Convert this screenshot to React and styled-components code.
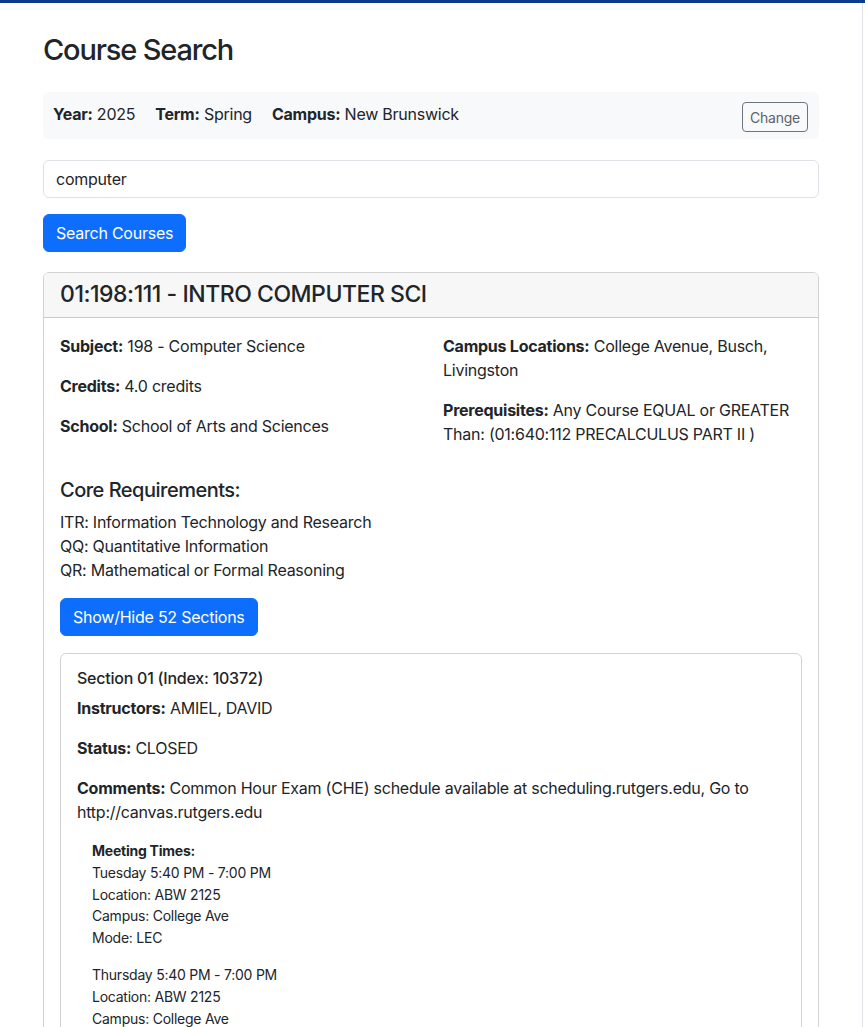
import React from 'react';
import styled, { createGlobalStyle } from 'styled-components';

const GlobalStyle = createGlobalStyle`
  * { box-sizing: border-box; }
  body {
    margin: 0;
    border-top: 3px solid #0b3b8c;
    font-family: Inter, "Noto Sans", "Liberation Sans", sans-serif;
    font-size: 16px;
    line-height: 1.5;
    letter-spacing: -0.015em;
    color: #212529;
    background: #fff;
  }
  button, input { letter-spacing: inherit; }
`;

const Page = styled.div`
  width: 863px;
  min-height: calc(100vh - 3px);
  padding: 30px 43px 40px;
  border-right: 1px solid #dee2e6;
`;

const Title = styled.h2`
  font-size: 29px;
  font-weight: 500;
  line-height: 1.2;
  letter-spacing: -0.04em;
  margin: 0 0 24px;
`;

const InfoBar = styled.div`
  display: flex;
  justify-content: space-between;
  align-items: flex-start;
  background: #f8f9fa;
  border-radius: 6px;
  padding: 10px 11px 7px 10px;
  margin-bottom: 21px;
`;

const InfoItems = styled.div`
  display: flex;
  gap: 20px;
`;

const SmallOutlineButton = styled.button`
  font-family: inherit;
  font-size: 14px;
  line-height: 1.5;
  color: #5c636a;
  background: transparent;
  border: 1px solid #6c757d;
  border-radius: 4px;
  padding: 4px 7px;
  height: 30px;
  cursor: pointer;
`;

const SearchInput = styled.input`
  display: block;
  width: 100%;
  height: 38px;
  font-family: inherit;
  font-size: 16px;
  color: #212529;
  padding: 6px 12px;
  border: 1px solid #dee2e6;
  border-radius: 6px;
  margin-bottom: 16px;
  outline: none;
`;

const PrimaryButton = styled.button`
  font-family: inherit;
  font-size: 16px;
  line-height: 1.5;
  color: #fff;
  background: #0d6efd;
  border: 1px solid #0d6efd;
  border-radius: 6px;
  padding: 6px 12px;
  height: 38px;
  cursor: pointer;
`;

const Card = styled.div`
  border: 1px solid rgba(0, 0, 0, 0.175);
  border-radius: 6px;
  margin-top: ${({ $mt }) => $mt || 0}px;
  overflow: hidden;
`;

const CardHeader = styled.div`
  background: #f7f7f7;
  border-bottom: 1px solid rgba(0, 0, 0, 0.175);
  padding: 8px 16px 9px;
`;

const CourseTitle = styled.h4`
  margin: 0;
  font-size: 23px;
  font-weight: 500;
  line-height: 1.2;
  letter-spacing: -0.02em;
`;

const CardBody = styled.div`
  padding: ${({ $pt }) => $pt ?? 16}px 16px 16px;
`;

const Row = styled.div`
  display: grid;
  grid-template-columns: 1fr 1fr;
  column-gap: 24px;
`;

const Para = styled.p`
  margin: 0 0 16px;
`;

const SubHeading = styled.h5`
  font-size: 20px;
  font-weight: 500;
  line-height: 1.2;
  letter-spacing: -0.025em;
  margin: 16px 0 8px;
`;

const CoreList = styled.div`
  margin-bottom: 16px;
`;

const SectionTitle = styled.h6`
  font-size: 16px;
  font-weight: 500;
  line-height: 20px;
  margin: 0 0 8px;
`;

const Meetings = styled.div`
  padding-left: 15px;
  font-size: 14px;
  line-height: 21.6px;
`;

const Meeting = styled.div`
  margin-bottom: 16px;
`;

const Label = ({ name, children }) => (
  <span>
    <strong>{name}:</strong> {children}
  </span>
);

const meetings = [
  { day: 'Tuesday', time: '5:40 PM - 7:00 PM', location: 'ABW 2125', campus: 'College Ave', mode: 'LEC' },
  { day: 'Thursday', time: '5:40 PM - 7:00 PM', location: 'ABW 2125', campus: 'College Ave', mode: 'LEC' },
];

export default function App() {
  return (
    <>
      <GlobalStyle />
      <Page>
        <Title>Course Search</Title>

        <InfoBar>
          <InfoItems>
            <Label name="Year">2025</Label>
            <Label name="Term">Spring</Label>
            <Label name="Campus">New Brunswick</Label>
          </InfoItems>
          <SmallOutlineButton>Change</SmallOutlineButton>
        </InfoBar>

        <SearchInput defaultValue="computer" />
        <PrimaryButton>Search Courses</PrimaryButton>

        <Card $mt={20}>
          <CardHeader>
            <CourseTitle>01:198:111 - INTRO COMPUTER SCI</CourseTitle>
          </CardHeader>
          <CardBody>
            <Row>
              <div>
                <Para><Label name="Subject">198 - Computer Science</Label></Para>
                <Para><Label name="Credits">4.0 credits</Label></Para>
                <Para><Label name="School">School of Arts and Sciences</Label></Para>
              </div>
              <div>
                <Para><Label name="Campus Locations">College Avenue, Busch, Livingston</Label></Para>
                <Para>
                  <Label name="Prerequisites">Any Course EQUAL or GREATER Than: (01:640:112 PRECALCULUS PART II )</Label>
                </Para>
              </div>
            </Row>

            <SubHeading>Core Requirements:</SubHeading>
            <CoreList>
              <div>ITR: Information Technology and Research</div>
              <div>QQ: Quantitative Information</div>
              <div>QR: Mathematical or Formal Reasoning</div>
            </CoreList>

            <PrimaryButton>Show/Hide 52 Sections</PrimaryButton>

            <Card $mt={17}>
              <CardBody $pt={14}>
                <SectionTitle>Section 01 (Index: 10372)</SectionTitle>
                <Para><Label name="Instructors">AMIEL, DAVID</Label></Para>
                <Para><Label name="Status">CLOSED</Label></Para>
                <Para>
                  <Label name="Comments">Common Hour Exam (CHE) schedule available at scheduling.rutgers.edu, Go to http://canvas.rutgers.edu</Label>
                </Para>
                <Meetings>
                  <strong>Meeting Times:</strong>
                  {meetings.map((m) => (
                    <Meeting key={m.day}>
                      <div>{m.day} {m.time}</div>
                      <div>Location: {m.location}</div>
                      <div>Campus: {m.campus}</div>
                      <div>Mode: {m.mode}</div>
                    </Meeting>
                  ))}
                </Meetings>
              </CardBody>
            </Card>
          </CardBody>
        </Card>
      </Page>
    </>
  );
}
